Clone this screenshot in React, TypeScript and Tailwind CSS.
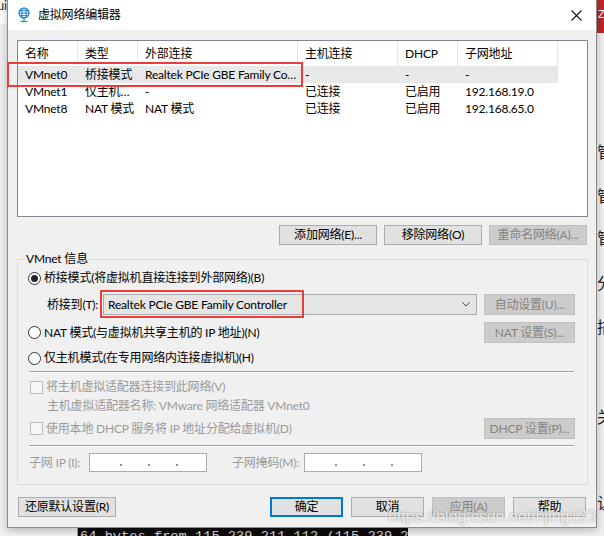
import React from "react";

const cols = ["w-[60px]", "w-[60px]", "w-[160px]", "w-[100px]", "w-[60px]", "w-[100px]"];
const header = ["名称", "类型", "外部连接", "主机连接", "DHCP", "子网地址"];
const rows = [
  ["VMnet0", "桥接模式", "Realtek PCIe GBE Family Co…", "-", "-", "-"],
  ["VMnet1", "仅主机…", "-", "已连接", "已启用", "192.168.19.0"],
  ["VMnet8", "NAT 模式", "NAT 模式", "已连接", "已启用", "192.168.65.0"],
];

function Btn({ label, className, disabled, primary }: { label: string; className: string; disabled?: boolean; primary?: boolean }) {
  const look = disabled
    ? "bg-[#cccccc] border border-[#bfbfbf] text-[#838383]"
    : primary
    ? "bg-[#e1e1e1] border-2 border-[#0078d7] text-black"
    : "bg-[#e1e1e1] border border-[#adadad] text-black";
  return (
    <div className={`flex items-center justify-center text-[12px] leading-[14px] whitespace-nowrap ${look} ${className}`}>
      {label}
    </div>
  );
}

function Radio({ checked }: { checked?: boolean }) {
  return (
    <span className="w-[13px] h-[13px] shrink-0 rounded-full border border-[#333333] bg-white flex items-center justify-center">
      {checked && <span className="w-[7px] h-[7px] rounded-full bg-[#222222]" />}
    </span>
  );
}

function Check() {
  return <span className="w-[13px] h-[13px] shrink-0 border border-[#bcbcbc] bg-[#f7f7f7]" />;
}

function IpBox() {
  return (
    <div className="w-[118px] h-[19px] border border-[#ababab] bg-white flex items-center pl-[30px] gap-[26px]">
      <span className="w-[2px] h-[2px] mt-[5px] bg-[#909090]" />
      <span className="w-[2px] h-[2px] mt-[5px] bg-[#909090]" />
      <span className="w-[2px] h-[2px] mt-[5px] bg-[#909090]" />
    </div>
  );
}

export default function App() {
  return (
    <div className="relative w-[604px] h-[536px] overflow-hidden bg-[#f0f0f0] font-['Lato','Noto_Sans_CJK_SC',sans-serif] tracking-[-0.2px] text-[12px] text-black">
      {/* desktop behind the dialog */}
      <div className="absolute left-0 top-0 w-[7px] h-[24px] bg-white" />
      <span className="absolute left-[-3px] top-[-3px] text-[13px] leading-[16px] text-[#333]">ui</span>
      <div className="absolute left-[596px] top-0 w-[8px] h-[33px] bg-[#b8282a] overflow-hidden">
        <span className="block pl-[2px] pt-[8px] text-[11px] leading-[12px] text-white">Z</span>
      </div>
      {[
        ["管", "top-[143px]"],
        ["管", "top-[187px]"],
        ["管", "top-[229px]"],
        ["分", "top-[274px]"],
        ["描", "top-[318px]"],
        ["关", "top-[408px]"],
        ["让", "top-[494px]"],
      ].map(([c, t], i) => (
        <span key={i} className={`absolute left-[597px] ${t} text-[16px] leading-[18px] text-[#222]`}>
          {c}
        </span>
      ))}
      <div className="absolute left-[77px] top-[527px] w-[331px] h-[12px] bg-[#0c0c0c] border-t border-l border-[#a0a0a0] overflow-hidden">
        <span className="block pl-[2px] pt-[1px] font-['Liberation_Mono',monospace] tracking-normal text-[13.7px] leading-[16px] text-[#d8d8d8] whitespace-nowrap">
          64 bytes from 115.239.211.112 (115.239.2
        </span>
      </div>

      {/* dialog window */}
      <div className="absolute left-[7px] top-0 w-[590px] h-[528px] border-x border-b border-[#8a8a8a] bg-[#f0f0f0] shadow-[0_2px_8px_rgba(0,0,0,0.25)] flex flex-col">
        <div className="h-[30px] bg-white flex items-center pl-[9px] pr-[9px] shrink-0">
          <svg width="14" height="16" viewBox="0 0 14 16" className="shrink-0">
            <circle cx="7" cy="6" r="5" fill="none" stroke="#1b7fd1" strokeWidth="1.2" />
            <ellipse cx="7" cy="6" rx="2.2" ry="5" fill="none" stroke="#1b7fd1" strokeWidth="1" />
            <line x1="2" y1="6" x2="12" y2="6" stroke="#1b7fd1" strokeWidth="1" />
            <line x1="2.8" y1="3.5" x2="11.2" y2="3.5" stroke="#1b7fd1" strokeWidth="0.8" />
            <line x1="2.8" y1="8.5" x2="11.2" y2="8.5" stroke="#1b7fd1" strokeWidth="0.8" />
            <line x1="7" y1="11" x2="7" y2="14" stroke="#1a9fa0" strokeWidth="1.2" />
            <line x1="3.5" y1="14.5" x2="10.5" y2="14.5" stroke="#1a9fa0" strokeWidth="1.3" />
          </svg>
          <span className="ml-[7px] leading-[16px]">虚拟网络编辑器</span>
          <svg width="11" height="11" viewBox="0 0 11 11" className="ml-auto mr-[5px]">
            <path d="M0.5 0.5 L10.5 10.5 M10.5 0.5 L0.5 10.5" stroke="#111" strokeWidth="1.1" />
          </svg>
        </div>

        <div className="flex flex-col pl-[9px] pr-[8px] pt-[10px]">
          {/* network list */}
          <div className="h-[177px] border border-[#828790] bg-white">
            <div className="flex h-[25px]">
              {header.map((h, i) => (
                <div key={i} className={`${cols[i]} h-full pl-[7px] flex items-center border-r border-[#e5e5e5] leading-[14px] whitespace-nowrap`}>
                  {h}
                </div>
              ))}
            </div>
            {rows.map((r, ri) => (
              <div key={ri} className={`flex w-fit h-[17px] ${ri === 0 ? "bg-[#e8e8e8]" : ""}`}>
                {r.map((c, i) => (
                  <div key={i} className={`${cols[i]} pl-[7px] flex items-center leading-[14px] whitespace-nowrap overflow-hidden`}>
                    {c}
                  </div>
                ))}
              </div>
            ))}
          </div>

          <div className="flex justify-end gap-[7px] mt-[8px] mr-[1px]">
            <Btn label="添加网络(E)..." className="w-[98px] h-[20px]" />
            <Btn label="移除网络(O)" className="w-[98px] h-[20px]" />
            <Btn label="重命名网络(A)..." className="w-[98px] h-[20px]" disabled />
          </div>

          {/* VMnet info group */}
          <fieldset className="mt-[6px] border border-[#dcdcdc] min-w-0">
            <legend className="ml-[6px] px-[2px] leading-[16px]">VMnet 信息</legend>
            <div className="flex flex-col pl-[10px] pr-[12px] pb-[12px]">
              <div className="flex items-center h-[22px] gap-[3px]">
                <Radio checked />
                <span className="leading-[14px]">桥接模式(将虚拟机直接连接到外部网络)(B)</span>
              </div>
              <div className="flex items-center h-[21px] mt-[5px]">
                <span className="ml-[19px] w-[56px] leading-[14px] whitespace-nowrap">桥接到(T):</span>
                <div className="w-[374px] h-[21px] border border-[#acacac] bg-[#e5e5e5] flex items-center pl-[4px] pr-[6px]">
                  <span className="leading-[14px]">Realtek PCIe GBE Family Controller</span>
                  <svg width="8" height="5" viewBox="0 0 8 5" className="ml-auto">
                    <path d="M0.5 0.5 L4 4 L7.5 0.5" fill="none" stroke="#444" strokeWidth="1" />
                  </svg>
                </div>
                <Btn label="自动设置(U)..." className="w-[91px] h-[21px] ml-auto" disabled />
              </div>
              <div className="flex items-center h-[21px] mt-[7px] gap-[3px]">
                <Radio />
                <span className="leading-[14px]">NAT 模式(与虚拟机共享主机的 IP 地址)(N)</span>
                <Btn label="NAT 设置(S)..." className="w-[91px] h-[21px] ml-auto" disabled />
              </div>
              <div className="flex items-center h-[20px] mt-[5px] gap-[3px]">
                <Radio />
                <span className="leading-[14px]">仅主机模式(在专用网络内连接虚拟机)(H)</span>
              </div>
              <div className="mt-[3px] mx-[1px] h-[2px] border-t border-[#a0a0a0] border-b border-b-white" />
              <div className="flex items-center h-[20px] mt-[4px] gap-[3px] pl-[2px] text-[#9a9a9a]">
                <Check />
                <span className="leading-[14px]">将主机虚拟适配器连接到此网络(V)</span>
              </div>
              <div className="h-[16px] mt-[1px] pl-[19px] flex items-center text-[#9a9a9a]">
                <span className="leading-[14px]">主机虚拟适配器名称: VMware 网络适配器 VMnet0</span>
              </div>
              <div className="flex items-center h-[21px] mt-[4px] gap-[3px] pl-[2px] text-[#9a9a9a]">
                <Check />
                <span className="leading-[14px]">使用本地 DHCP 服务将 IP 地址分配给虚拟机(D)</span>
                <Btn label="DHCP 设置(P)..." className="w-[91px] h-[21px] ml-auto" disabled />
              </div>
              <div className="mt-[6px] mx-[1px] h-[2px] border-t border-[#a0a0a0] border-b border-b-white" />
              <div className="flex items-center h-[19px] mt-[6px] text-[#9a9a9a]">
                <span className="ml-[1px] w-[60px] leading-[14px] whitespace-nowrap">子网 IP (I):</span>
                <IpBox />
                <span className="ml-[25px] w-[72px] leading-[14px] whitespace-nowrap">子网掩码(M):</span>
                <IpBox />
              </div>
            </div>
          </fieldset>

          <div className="flex items-center mt-[12px] h-[20px]">
            <Btn label="还原默认设置(R)" className="w-[98px] h-[20px] ml-[1px]" />
            <div className="flex gap-[8px] ml-auto mr-[2px]">
              <Btn label="确定" className="w-[73px] h-[20px]" primary />
              <Btn label="取消" className="w-[73px] h-[20px]" />
              <Btn label="应用(A)" className="w-[73px] h-[20px]" disabled />
              <Btn label="帮助" className="w-[73px] h-[20px]" />
            </div>
          </div>
        </div>
      </div>

      {/* red annotation boxes */}
      <div className="absolute left-[7px] top-[62px] w-[296px] h-[25px] border-2 border-[#ee3b3b]" />
      <div className="absolute left-[100px] top-[290px] w-[204px] h-[28px] border-2 border-[#ee3b3b]" />

      {/* watermark */}
      <span className="absolute left-[388px] top-[507px] font-['Liberation_Sans',sans-serif] tracking-normal text-[16px] leading-[20px] text-white/80 [text-shadow:0_0_2px_rgba(0,0,0,0.45)] whitespace-nowrap">
        https://blog.csdn.net/hjing123
      </span>
    </div>
  );
}
